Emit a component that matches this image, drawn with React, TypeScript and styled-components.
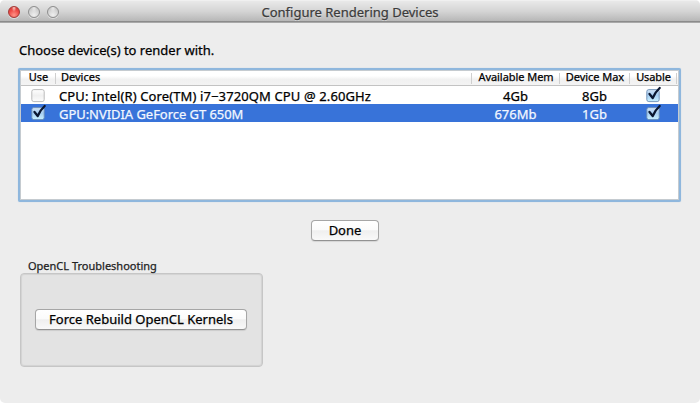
import React from 'react';
import styled, { createGlobalStyle, css } from 'styled-components';

const GlobalStyle = createGlobalStyle`
  * { box-sizing: border-box; }
  html, body { margin: 0; background: #fff; }
  body { font-family: "Lucida Grande", "Noto Sans", "Open Sans", sans-serif; color: #000; overflow: hidden; }
`;

const Window = styled.div`
  width: 700px;
  height: 403px;
  display: flex;
  flex-direction: column;
  background: #ededed;
  border-radius: 5px;
  overflow: hidden;
`;

const TitleBar = styled.header`
  height: 23px;
  flex: none;
  display: grid;
  grid-template-columns: 1fr auto 1fr;
  align-items: center;
  background: linear-gradient(#e9e9e9, #d4d4d4 50%, #b4b4b4);
  border-top: 1px solid #f0f0f0;
  border-bottom: 1px solid #a9a9a9;
  box-shadow: inset 0 -1px 0 #8c8c8c;
`;

const Lights = styled.div`
  display: flex;
  gap: 7.5px;
  padding-left: 8px;
`;

const Light = styled.span<{ $close?: boolean }>`
  width: 12px;
  height: 12px;
  border-radius: 50%;
  border: 1px solid ${(p) => (p.$close ? '#a33a37' : '#8e8e8e')};
  background: ${(p) =>
    p.$close
      ? 'radial-gradient(ellipse at 50% 8%, #f5c0ba 0 4%, transparent 32%), radial-gradient(circle at 50% 80%, #ff9488, #ee4a45 55%, #c83a37)'
      : 'radial-gradient(ellipse at 50% 8%, #e8e8e8 0 4%, transparent 40%), radial-gradient(circle at 50% 80%, #efefef, #cecece 65%, #b8b8b8)'};
  box-shadow: 0 1px 0 rgba(255, 255, 255, 0.45);
`;

const Text = styled.span<{ $size: number; $track?: number }>`
  display: inline-block;
  white-space: pre;
  font-size: ${(p) => p.$size}px;
  line-height: 16px;
  letter-spacing: ${(p) => p.$track ?? 0}px;
  -webkit-text-stroke: 0.25px currentColor;
`;

const TitleText = styled(Text)`
  color: #3b3b3b;
  text-shadow: 0 1px 0 rgba(255, 255, 255, 0.4);
`;

const Content = styled.main`
  flex: 1;
  display: flex;
  flex-direction: column;
  align-items: flex-start;
  padding: 15px 18px 0;
`;

const Prompt = styled.div`
  height: 30px;
  padding-left: 1px;
`;

const Table = styled.section`
  width: 663px;
  height: 134px;
  border: 2px solid #8fb7dd;
  border-radius: 2px;
  background: #fff;
  box-shadow: inset 0 0 0 1px #c5cbd0, 0 0 1px #a9c8e6;
  padding: 1px;
`;

const columns = css`
  display: grid;
  grid-template-columns: 35px 416px 88px 70px 47px 1px;
`;

const HeaderRow = styled.div`
  ${columns}
  height: 15px;
  background: linear-gradient(#fff 0 35%, #f1f1f1 60%, #f4f4f4);
  border-bottom: 1px solid #c3c3c3;
`;

const HeaderCell = styled.div<{ $left?: boolean }>`
  display: flex;
  justify-content: ${(p) => (p.$left ? 'flex-start' : 'center')};
  align-items: center;
  padding-left: ${(p) => (p.$left ? 5 : 1)}px;
  padding-bottom: 3px;
  border-right: 1px solid #cfcfcf;
  height: 11px;
  margin-top: 2px;
`;

const DeviceRow = styled.div<{ $selected?: boolean }>`
  ${columns}
  height: 18px;
  color: ${(p) => (p.$selected ? '#f3f7ff' : '#000')};
  background: ${(p) => (p.$selected ? '#3873d9' : '#fff')};
`;

const Cell = styled.div<{ $left?: boolean }>`
  display: flex;
  align-items: flex-start;
  justify-content: ${(p) => (p.$left ? 'flex-start' : 'center')};
  padding: 2px 1px 0 ${(p) => (p.$left ? 3 : 0)}px;
`;

const CheckCell = styled.div`
  display: flex;
  justify-content: center;
  padding-right: 1px;
`;

const CheckSvg = styled.svg`
  display: block;
  width: 18px;
  height: 18px;
`;

function Check({ on }: { on?: boolean }) {
  return (
    <CheckSvg viewBox="0 0 18 18">
      <defs>
        <linearGradient id="boxOn" x2="0" y2="1">
          <stop offset="0" stopColor="#d3e4f6" />
          <stop offset=".45" stopColor="#a6cdf1" />
          <stop offset="1" stopColor="#c8f0ff" />
        </linearGradient>
        <linearGradient id="boxOff" x2="0" y2="1">
          <stop offset="0" stopColor="#fff" />
          <stop offset=".5" stopColor="#f0f0f0" />
          <stop offset="1" stopColor="#fcfcfc" />
        </linearGradient>
      </defs>
      <rect x="2.8" y="3.6" width="12.4" height="12" rx="2" fill={on ? 'url(#boxOn)' : 'url(#boxOff)'} stroke={on ? '#6a8cb4' : '#b3b3b3'} strokeWidth=".9" />
      {on && <path d="M5.5 8 L8.7 12 Q10.8 6.5 15.7 2" fill="none" stroke="#0b1730" strokeWidth="2.3" strokeLinejoin="round" strokeLinecap="round" />}
    </CheckSvg>
  );
}

const PushButton = styled.button<{ $w: number }>`
  width: ${(p) => p.$w}px;
  height: 21px;
  padding: 0 0 1px;
  display: flex;
  align-items: center;
  justify-content: center;
  font-family: inherit;
  color: #000;
  border: 1px solid #a6a6a6;
  border-bottom-color: #929292;
  border-radius: 4px;
  background: linear-gradient(#fff, #fbfbfb 45%, #efefef 52%, #f9f9f9);
  box-shadow: 0 1px 1px rgba(0, 0, 0, 0.1);
`;

const Actions = styled.div`
  margin: 18px 0 0 293px;
`;

const Group = styled.section`
  margin: 17px 0 0 2px;
`;

const Caption = styled.div`
  height: 15px;
  padding-left: 8px;
  display: flex;
  align-items: center;
  color: #222;
`;

const GroupBox = styled.div`
  width: 243px;
  height: 94px;
  display: flex;
  align-items: center;
  justify-content: center;
  padding: 0 1px 2px 0;
  border: 1px solid #c6c6c6;
  border-radius: 4px;
  background: #e3e3e3;
  box-shadow: inset 0 0 1px 1px rgba(0, 0, 0, 0.07);
`;

const headers = [
  { label: 'Use' },
  { label: 'Devices', left: true },
  { label: 'Available Mem', track: -0.05 },
  { label: 'Device Max', track: -0.05 },
  { label: 'Usable', track: -0.1 },
];

const devices = [
  { use: false, name: 'CPU: Intel(R) Core(TM) i7−3720QM CPU @ 2.60GHz', track: 0.12, mem: '4Gb', max: '8Gb', usable: true, selected: false },
  { use: true, name: 'GPU:NVIDIA GeForce GT 650M', track: -0.05, mem: '676Mb', max: '1Gb', usable: true, selected: true },
];

export default function App() {
  return (
    <>
      <GlobalStyle />
      <Window>
        <TitleBar>
          <Lights><Light $close /><Light /><Light /></Lights>
          <TitleText $size={13}>Configure Rendering Devices</TitleText>
        </TitleBar>
        <Content>
          <Prompt><Text $size={13}>Choose device(s) to render with.</Text></Prompt>
          <Table>
            <HeaderRow>
              {headers.map((h) => (
                <HeaderCell key={h.label} $left={h.left}><Text $size={11} $track={h.track}>{h.label}</Text></HeaderCell>
              ))}
            </HeaderRow>
            {devices.map((d) => (
              <DeviceRow key={d.name} $selected={d.selected}>
                <CheckCell><Check on={d.use} /></CheckCell>
                <Cell $left><Text $size={13} $track={d.track}>{d.name}</Text></Cell>
                <Cell><Text $size={13}>{d.mem}</Text></Cell>
                <Cell><Text $size={13}>{d.max}</Text></Cell>
                <CheckCell><Check on={d.usable} /></CheckCell>
              </DeviceRow>
            ))}
          </Table>
          <Actions><PushButton $w={68}><Text $size={13}>Done</Text></PushButton></Actions>
          <Group>
            <Caption><Text $size={11}>OpenCL Troubleshooting</Text></Caption>
            <GroupBox>
              <PushButton $w={212}><Text $size={13}>Force Rebuild OpenCL Kernels</Text></PushButton>
            </GroupBox>
          </Group>
        </Content>
      </Window>
    </>
  );
}
